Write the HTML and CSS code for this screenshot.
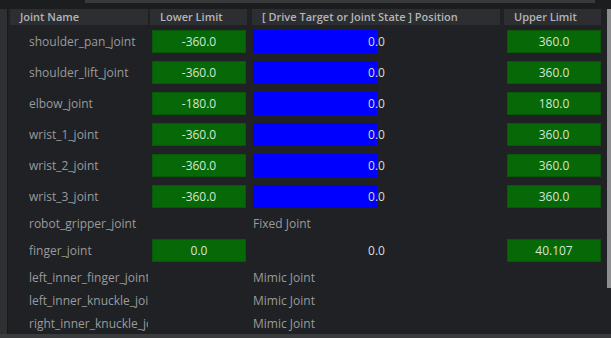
FILE: index.html
```html
<!DOCTYPE html>
<html lang="en">
<head>
    <meta charset="UTF-8">
    <title>Joint Limits</title>
    <link rel="stylesheet" href="styles.css">
</head>
<body>
    <div class="top-strip"><div class="top-bar"></div></div>
    <div class="main">
        <div class="left-edge"></div>
        <div class="panel">
            <div class="joint-table">
                <div class="head">Joint Name</div>
                <div class="head head-lower">Lower Limit</div>
                <div class="head head-drive">[ Drive Target or Joint State ] Position</div>
                <div class="head head-upper">Upper Limit</div>

                <div class="name">shoulder_pan_joint</div>
                <div class="lower"><span class="limit">-360.0</span></div>
                <div class="drive"><span class="fill" style="width: 50%"></span><span class="value">0.0</span></div>
                <div class="upper"><span class="limit">360.0</span></div>

                <div class="name">shoulder_lift_joint</div>
                <div class="lower"><span class="limit">-360.0</span></div>
                <div class="drive"><span class="fill" style="width: 50%"></span><span class="value">0.0</span></div>
                <div class="upper"><span class="limit">360.0</span></div>

                <div class="name">elbow_joint</div>
                <div class="lower"><span class="limit">-180.0</span></div>
                <div class="drive"><span class="fill" style="width: 50%"></span><span class="value">0.0</span></div>
                <div class="upper"><span class="limit">180.0</span></div>

                <div class="name">wrist_1_joint</div>
                <div class="lower"><span class="limit">-360.0</span></div>
                <div class="drive"><span class="fill" style="width: 50%"></span><span class="value">0.0</span></div>
                <div class="upper"><span class="limit">360.0</span></div>

                <div class="name">wrist_2_joint</div>
                <div class="lower"><span class="limit">-360.0</span></div>
                <div class="drive"><span class="fill" style="width: 50%"></span><span class="value">0.0</span></div>
                <div class="upper"><span class="limit">360.0</span></div>

                <div class="name">wrist_3_joint</div>
                <div class="lower"><span class="limit">-360.0</span></div>
                <div class="drive"><span class="fill" style="width: 50%"></span><span class="value">0.0</span></div>
                <div class="upper"><span class="limit">360.0</span></div>

                <div class="name short">robot_gripper_joint</div>
                <div></div>
                <div class="label">Fixed Joint</div>
                <div></div>

                <div class="name">finger_joint</div>
                <div class="lower"><span class="limit">0.0</span></div>
                <div class="drive"><span class="value">0.0</span></div>
                <div class="upper"><span class="limit">40.107</span></div>

                <div class="name short">left_inner_finger_joint</div>
                <div></div>
                <div class="label">Mimic Joint</div>
                <div></div>

                <div class="name short">left_inner_knuckle_joint</div>
                <div></div>
                <div class="label">Mimic Joint</div>
                <div></div>

                <div class="name short">right_inner_knuckle_joint</div>
                <div></div>
                <div class="label">Mimic Joint</div>
                <div></div>
            </div>
        </div>
        <div class="scroll"><div class="thumb"></div></div>
    </div>
    <div class="bottom-strip"></div>
</body>
</html>
```

FILE: styles.css
```css
body {
    margin: 0;
    width: 611px;
    height: 338px;
    overflow: hidden;
    background-color: #1d1e20;
    font-family: "Open Sans", "Noto Sans", sans-serif;
    display: flex;
    flex-direction: column;
}

.top-strip {
    height: 9px;
    flex-shrink: 0;
    background-color: #1c1d1f;
}

.top-bar {
    margin-left: 85px;
    width: 510px;
    height: 3px;
    background-color: #38393b;
}

.main {
    flex: 1;
    display: flex;
    min-height: 0;
}

.left-edge {
    width: 7px;
    background-color: #2f3032;
    border-right: 1px solid #18191b;
}

.panel {
    flex: 1;
    background-color: #1f2124;
    padding-left: 2px;
    overflow: hidden;
}

.scroll {
    width: 10px;
    background-color: #1f2124;
    display: flex;
    justify-content: flex-end;
}

.thumb {
    width: 4px;
    height: 279px;
    background-color: #8d8e90;
}

.bottom-strip {
    height: 4px;
    flex-shrink: 0;
    background-color: #3a3b3d;
}

.joint-table {
    display: grid;
    grid-template-columns: 140px 102px 252px 97px;
    grid-template-rows: 17px;
    grid-auto-rows: auto;
}

.head {
    height: 16px;
    margin-right: 2px;
    padding-left: 10px;
    background-color: #2c2e31;
    color: #b4b5b7;
    font-size: 11px;
    font-weight: 600;
    line-height: 16px;
    white-space: nowrap;
    overflow: hidden;
}

.head-lower {
    margin-right: 5px;
}

.head-drive {
    margin-right: 4px;
}

.head-upper {
    margin-right: 0;
}

.name {
    height: 31px;
    padding-left: 19px;
    margin-right: 2px;
    color: #9a9b9d;
    font-size: 12px;
    line-height: 31px;
    white-space: nowrap;
    overflow: hidden;
}

.name.short {
    height: 23px;
    line-height: 23px;
}

.lower,
.upper,
.drive {
    display: flex;
    align-items: center;
}

.lower {
    padding-left: 2px;
}

.upper {
    padding-left: 3px;
}

.limit {
    width: 92px;
    height: 21px;
    background-color: #076807;
    border: 1px solid #0b560b;
    color: #d5e6d5;
    font-size: 12px;
    line-height: 21px;
    text-align: center;
}

.drive {
    position: relative;
    margin-left: 1px;
    margin-right: 4px;
    height: 23px;
    align-self: center;
    justify-content: center;
}

.fill {
    position: absolute;
    left: 0;
    top: 0;
    bottom: 0;
    background-color: #0000ff;
}

.value {
    position: relative;
    color: #dcdcdc;
    font-size: 12px;
}

.label {
    padding-left: 1px;
    color: #9a9b9d;
    font-size: 12px;
    line-height: 23px;
    white-space: nowrap;
}
```
